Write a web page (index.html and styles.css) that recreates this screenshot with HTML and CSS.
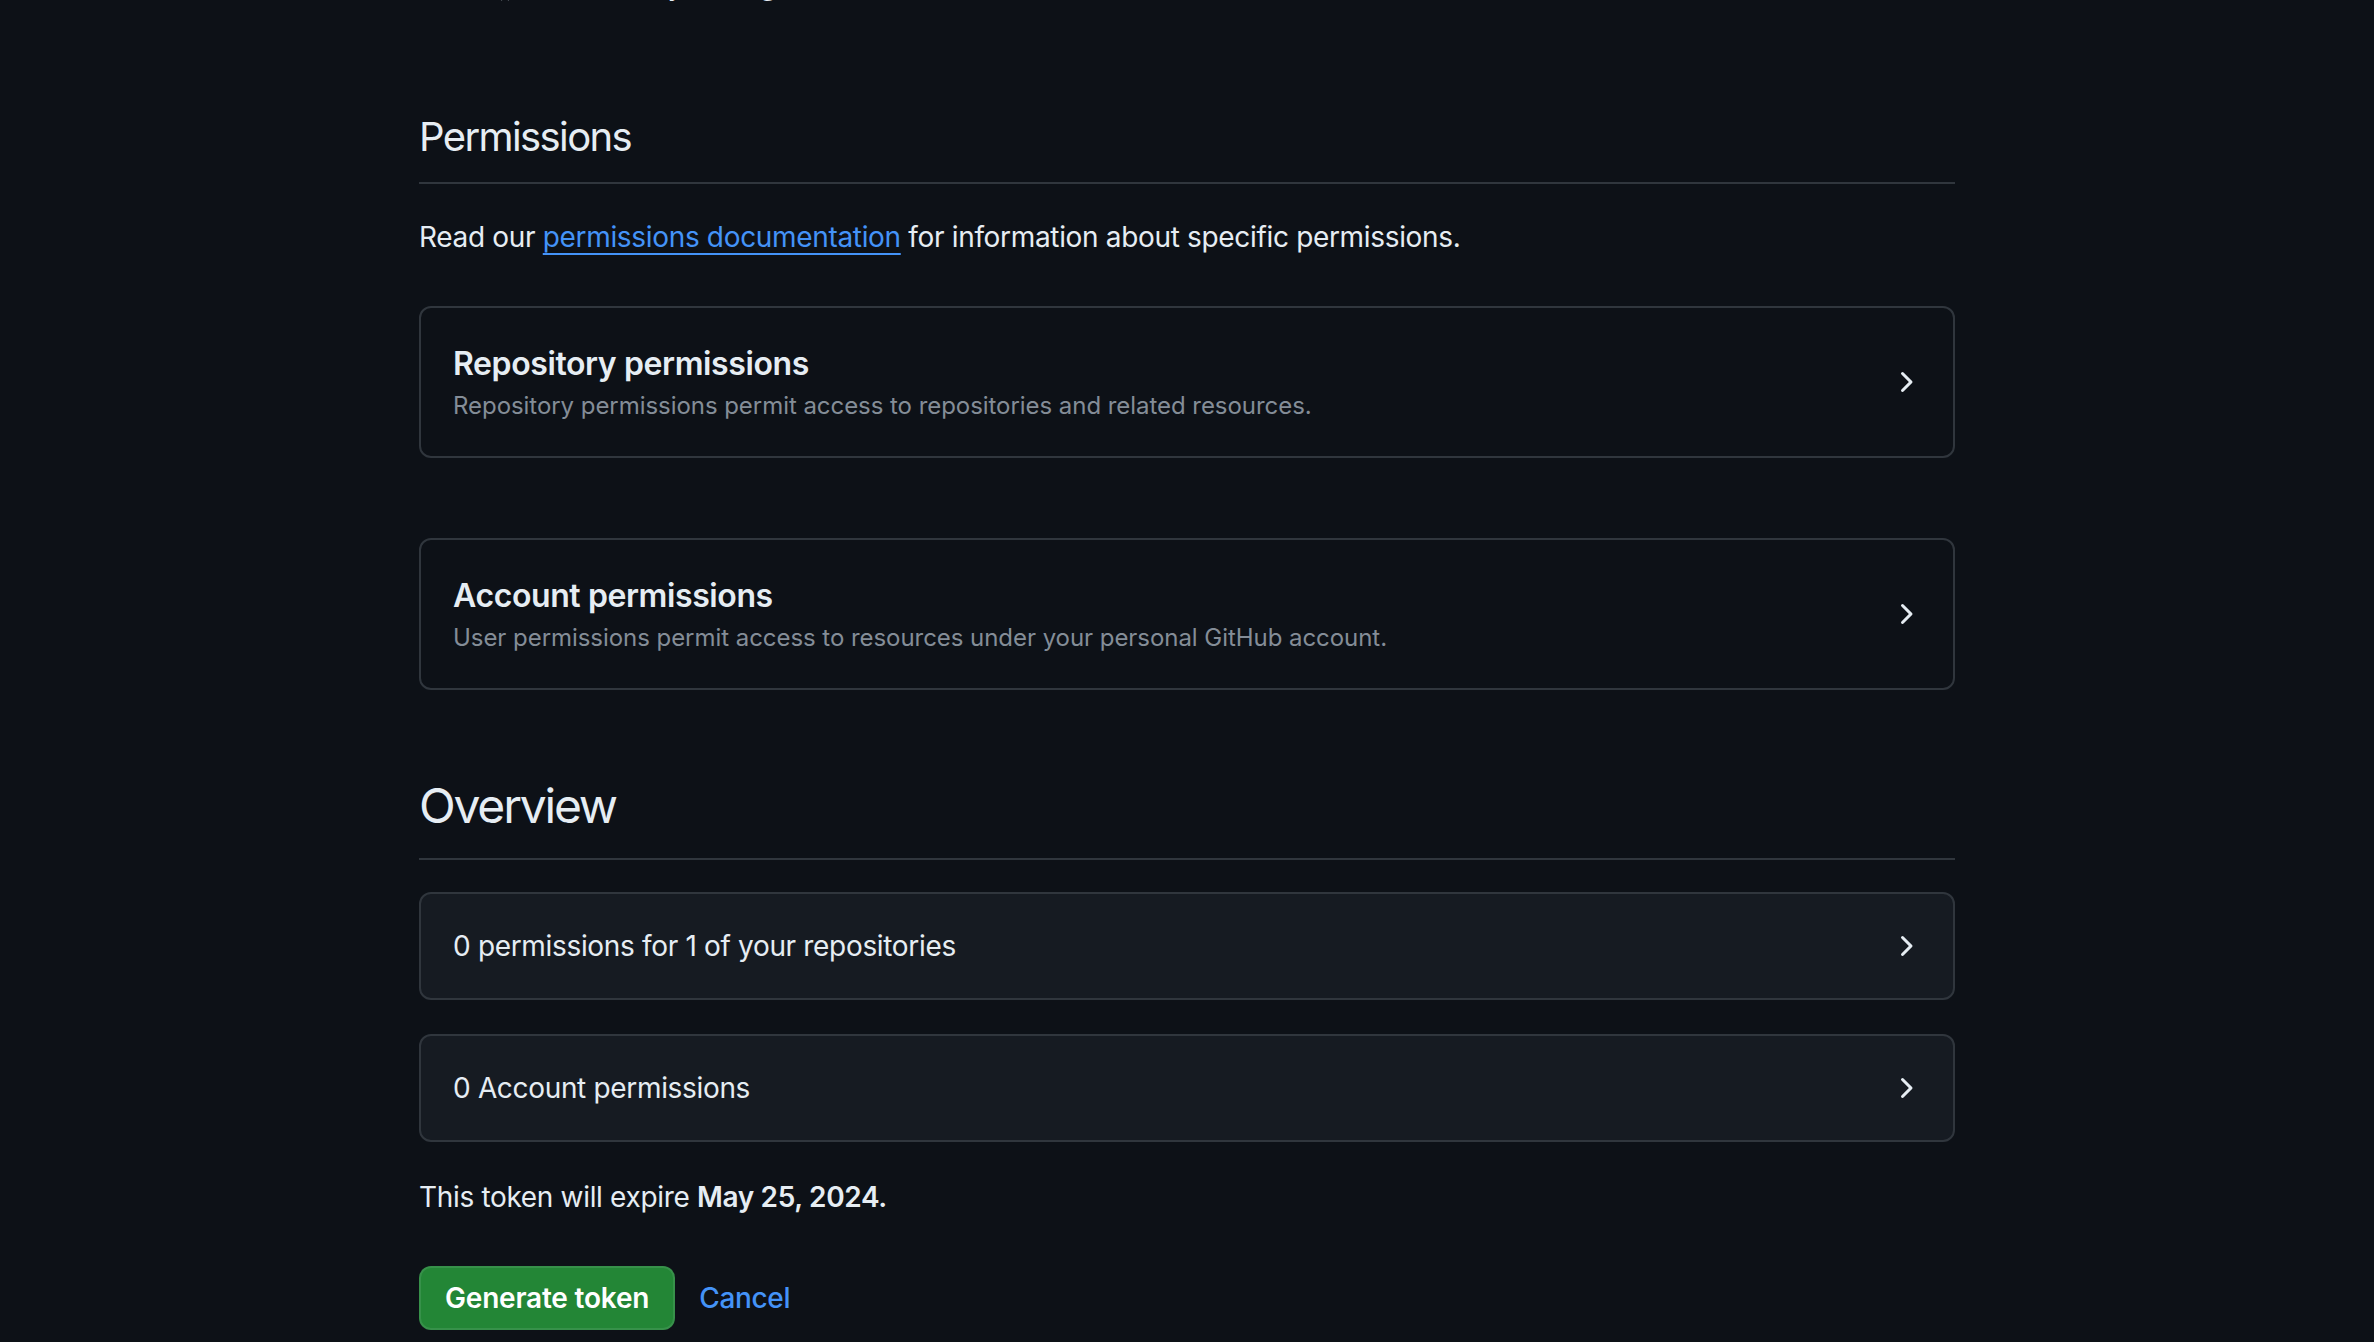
FILE: index.html
```html
<!DOCTYPE html>
<html lang="en">
<head>
<meta charset="utf-8">
<title>New fine-grained personal access token</title>
<link rel="stylesheet" href="styles.css">
</head>
<body>
<main class="container">
  <div class="prev-line">
    <svg class="repo-icon" viewBox="0 0 16 16" width="32" height="32" aria-hidden="true"><path fill="currentColor" d="M2 2.5A2.5 2.5 0 0 1 4.5 0h8.75a.75.75 0 0 1 .75.75v12.5a.75.75 0 0 1-.75.75h-2.5a.75.75 0 0 1 0-1.5h1.75v-2h-8a1 1 0 0 0-.714 1.7.75.75 0 1 1-1.072 1.05A2.495 2.495 0 0 1 2 11.5Zm10.5-1h-8a1 1 0 0 0-1 1v6.708A2.486 2.486 0 0 1 4.5 9h8ZM5 12.25a.25.25 0 0 1 .25-.25h3.5a.25.25 0 0 1 .25.25v3.250a.25.25 0 0 1-.4.2l-1.45-1.087a.249.249 0 0 0-.3 0L5.4 15.7a.25.25 0 0 1-.4-.2Z"/></svg>
    <span>octocat/my-config</span>
  </div>

  <section class="perm-section">
    <h2 class="subhead">Permissions</h2>
    <p class="lead">Read our <a href="#" class="doc-link">permissions documentation</a> for information about specific permissions.</p>

    <div class="perm-box">
      <div class="perm-text">
        <h3 class="perm-title">Repository permissions</h3>
        <div class="perm-desc">Repository permissions permit access to repositories and related resources.</div>
      </div>
      <svg class="chev" viewBox="0 0 16 16" width="32" height="32" aria-hidden="true"><path fill="currentColor" d="M6.22 3.22a.75.75 0 0 1 1.06 0l4.25 4.25a.75.75 0 0 1 0 1.06l-4.25 4.25a.751.751 0 0 1-1.042-.018.751.751 0 0 1-.018-1.042L9.94 8 6.22 4.28a.75.75 0 0 1 0-1.06Z"/></svg>
    </div>

    <div class="perm-box perm-box-second">
      <div class="perm-text">
        <h3 class="perm-title">Account permissions</h3>
        <div class="perm-desc">User permissions permit access to resources under your personal GitHub account.</div>
      </div>
      <svg class="chev" viewBox="0 0 16 16" width="32" height="32" aria-hidden="true"><path fill="currentColor" d="M6.22 3.22a.75.75 0 0 1 1.06 0l4.25 4.25a.75.75 0 0 1 0 1.06l-4.25 4.25a.751.751 0 0 1-1.042-.018.751.751 0 0 1-.018-1.042L9.94 8 6.22 4.28a.75.75 0 0 1 0-1.06Z"/></svg>
    </div>
  </section>

  <section class="overview-section">
    <h2 class="subhead subhead-large">Overview</h2>

    <div class="ov-box">
      <span>0 permissions for 1 of your repositories</span>
      <svg class="chev" viewBox="0 0 16 16" width="32" height="32" aria-hidden="true"><path fill="currentColor" d="M6.22 3.22a.75.75 0 0 1 1.06 0l4.25 4.25a.75.75 0 0 1 0 1.06l-4.25 4.25a.751.751 0 0 1-1.042-.018.751.751 0 0 1-.018-1.042L9.94 8 6.22 4.28a.75.75 0 0 1 0-1.06Z"/></svg>
    </div>

    <div class="ov-box ov-box-second">
      <span>0 Account permissions</span>
      <svg class="chev" viewBox="0 0 16 16" width="32" height="32" aria-hidden="true"><path fill="currentColor" d="M6.22 3.22a.75.75 0 0 1 1.06 0l4.25 4.25a.75.75 0 0 1 0 1.06l-4.25 4.25a.751.751 0 0 1-1.042-.018.751.751 0 0 1-.018-1.042L9.94 8 6.22 4.28a.75.75 0 0 1 0-1.06Z"/></svg>
    </div>

    <p class="expire">This token will expire <strong>May 25, 2024.</strong></p>

    <div class="actions">
      <button type="button" class="btn-primary">Generate token</button>
      <a href="#" class="cancel">Cancel</a>
    </div>
  </section>
</main>
</body>
</html>
```

FILE: styles.css
```css
* {
  box-sizing: border-box;
}

html, body {
  margin: 0;
  padding: 0;
  background: #0d1117;
}

body {
  color: #e6edf3;
  font-family: Inter, "Noto Sans", "Liberation Sans", sans-serif;
  font-size: 28px;
  line-height: 42px;
  letter-spacing: -0.33px;
  overflow: hidden;
  height: 1342px;
}

.container {
  width: 1536px;
  margin: 0 auto;
}

.prev-line {
  display: flex;
  align-items: center;
  gap: 14px;
  height: 42px;
  margin-top: -36px;
  padding-left: 72px;
  color: #e6edf3;
}

.repo-icon {
  color: #848d97;
  flex: none;
}

.perm-section {
  margin-top: 101px;
}

.subhead {
  margin: 0;
  font-size: 40px;
  line-height: 60px;
  font-weight: 400;
  letter-spacing: -1.6px;
  padding-bottom: 15px;
  border-bottom: 2px solid #30363d;
}

.subhead-large {
  font-size: 48px;
  line-height: 72px;
  letter-spacing: -2.2px;
  padding-bottom: 16px;
}

.lead {
  margin: 32px 0 0;
}

.doc-link {
  color: #4493f8;
  text-decoration: underline;
  text-decoration-thickness: 2px;
  text-underline-offset: 6px;
}

.perm-box {
  display: flex;
  align-items: center;
  justify-content: space-between;
  margin-top: 48px;
  padding: 32px;
  border: 2px solid #30363d;
  border-radius: 12px;
}

.perm-box-second {
  margin-top: 80px;
}

.perm-title {
  margin: 0;
  font-size: 32px;
  line-height: 48px;
  font-weight: 600;
  letter-spacing: -0.4px;
}

.perm-desc {
  font-size: 24px;
  line-height: 36px;
  letter-spacing: -0.05px;
  color: #848d97;
}

.chev {
  flex: none;
  color: #e6edf3;
}

.overview-section {
  margin-top: 80px;
}

.ov-box {
  display: flex;
  align-items: center;
  justify-content: space-between;
  margin-top: 32px;
  padding: 31px 32px;
  background: #161b22;
  border: 2px solid #30363d;
  border-radius: 12px;
}

.ov-box-second {
  margin-top: 34px;
}

.expire {
  margin: 34px 0 0;
}

.expire strong {
  font-weight: 600;
}

.actions {
  display: flex;
  align-items: center;
  gap: 24px;
  margin-top: 48px;
}

.btn-primary {
  height: 64px;
  padding: 0 24px;
  background: #238636;
  color: #ffffff;
  border: 2px solid rgba(240, 246, 252, 0.1);
  border-radius: 12px;
  font-family: inherit;
  font-size: 28px;
  font-weight: 600;
  letter-spacing: -0.2px;
  line-height: 40px;
}

.cancel {
  color: #4493f8;
  text-decoration: none;
  font-size: 28px;
  font-weight: 500;
}
```
